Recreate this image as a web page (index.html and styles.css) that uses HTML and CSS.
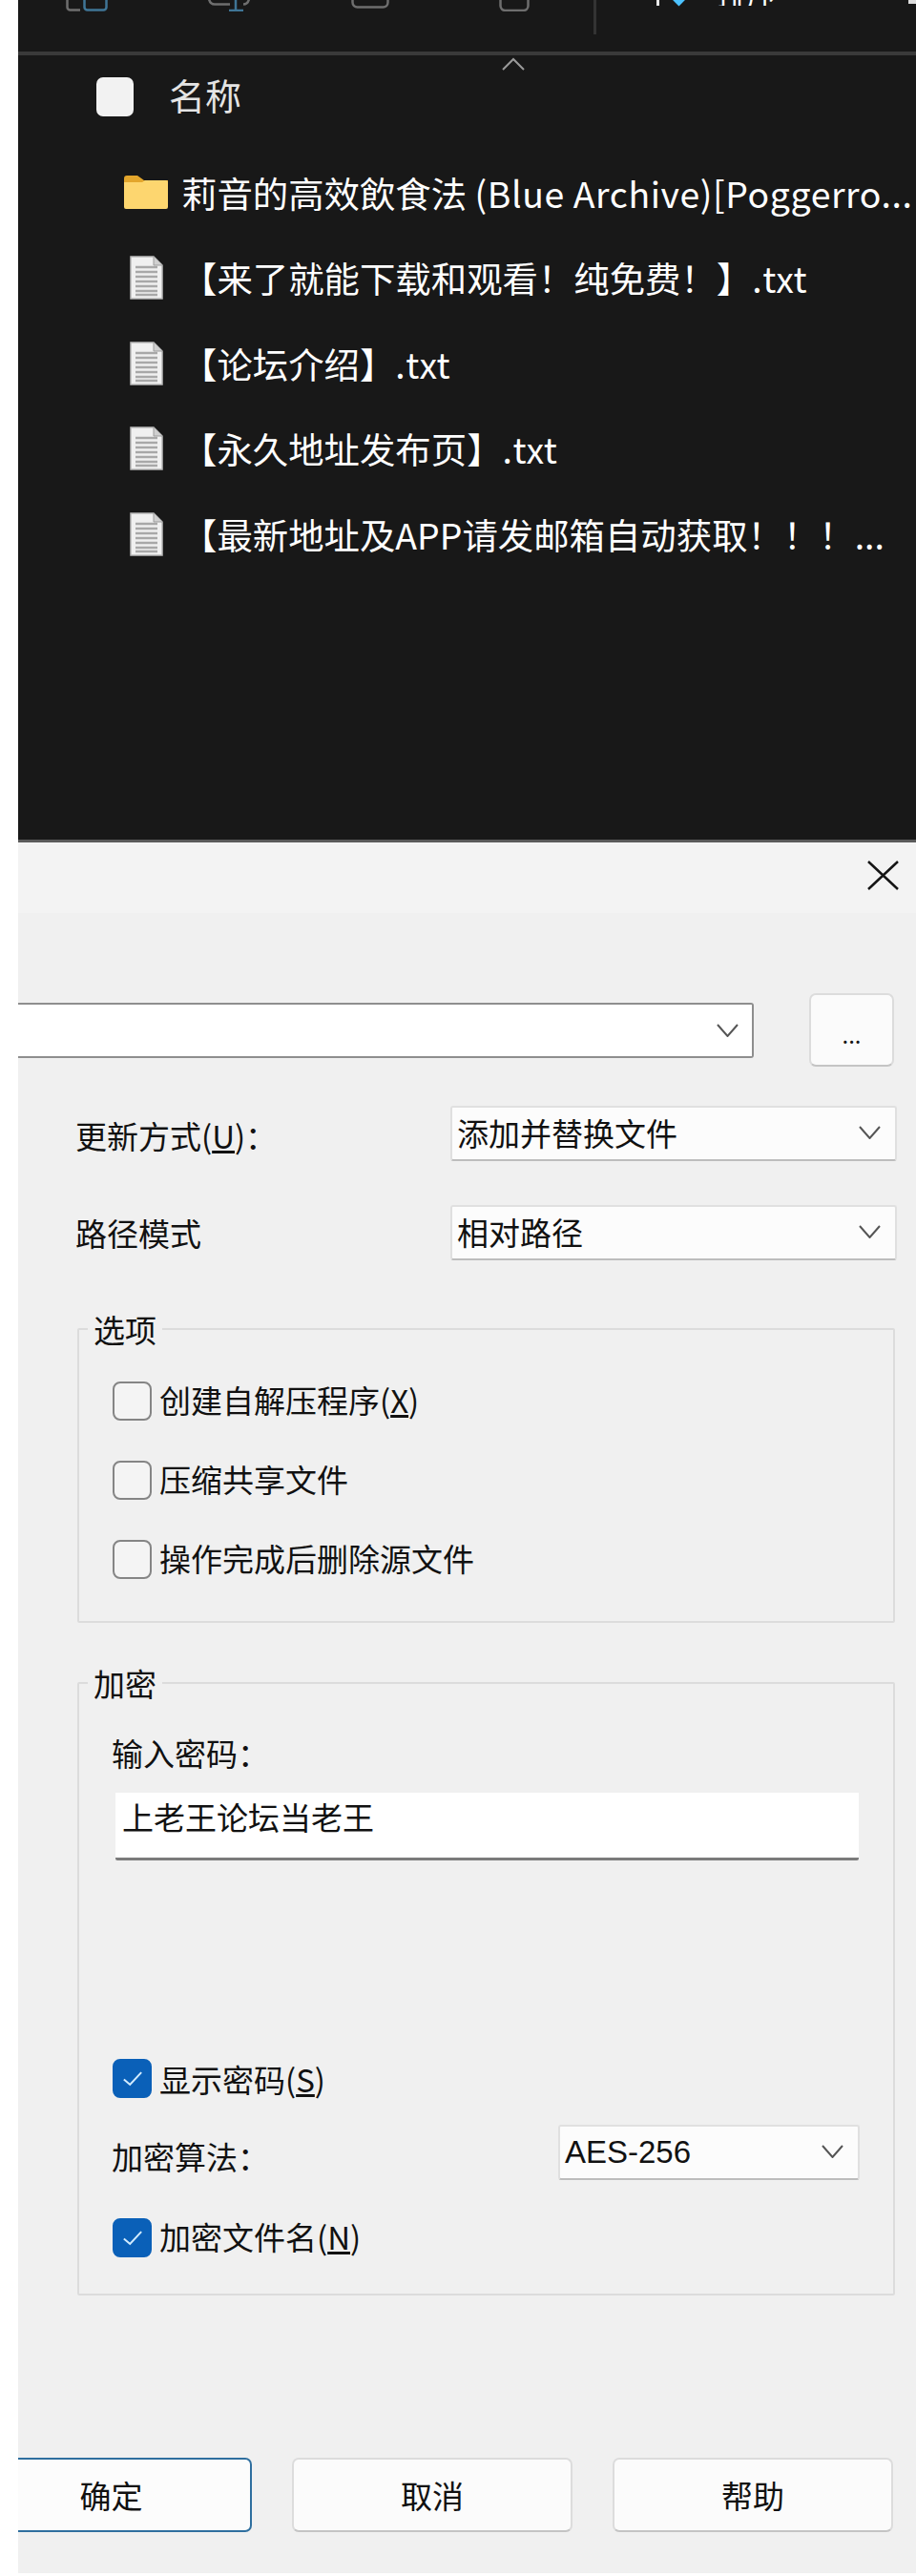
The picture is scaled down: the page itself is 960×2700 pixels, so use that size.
FILE: index.html
```html
<!DOCTYPE html>
<html lang="zh-CN">
<head>
<meta charset="utf-8">
<title>添加到压缩包</title>
<link rel="stylesheet" href="styles.css">
</head>
<body>
<main class="page">
  <section class="explorer">
    <div class="toolbar">
      <svg class="tool tool-a" viewBox="0 0 44 12"><path class="g" d="M1.5-6V7.5a3 3 0 0 0 3 3H15"/><rect class="b" x="19.5" y="-10" width="23" height="20.5" rx="3"/></svg>
      <svg class="tool tool-b" viewBox="0 0 46 12"><path class="g" d="M1.500-6Q1.500 4.500 8 4.500H24M38 4.500Q44.500 4.500 44.500-6"/><path class="b" d="M30-4V10M23 11H38"/></svg>
      <svg class="tool tool-c" viewBox="0 0 40 12"><rect class="g" x="1.500" y="-10" width="37" height="17.500" rx="5"/></svg>
      <svg class="tool tool-d" viewBox="0 0 32 12"><rect class="g" x="1.500" y="-10" width="29" height="21" rx="5"/></svg>
      <span class="divider"></span>
      <span class="stem"></span>
      <span class="diamond"></span>
      <span class="sort-label"><span>排序</span></span>
      <span class="blip"></span>
    </div>
    <div class="list-head">
      <span class="head-check"></span>
      <span class="head-name">名称</span>
      <svg class="caret" viewBox="0 0 24 14"><path d="M1 13 12 2l11 11"/></svg>
    </div>
    <ul class="files">
      <li class="file">
        <span class="slot"><svg class="folder" viewBox="0 0 46 35"><path class="tab" d="M0 3a3 3 0 0 1 3-3h11l7 5h25v6H0z"/><path class="body" d="M0 7h19l3-2h22a2 2 0 0 1 2 2v26a2 2 0 0 1-2 2H2a2 2 0 0 1-2-2z"/></svg></span>
        <span class="file-name">莉音的高效飲食法 <span class="latin">(Blue Archive)[Poggerro...</span></span>
      </li>
      <li class="file">
        <span class="slot"><svg class="doc" viewBox="0 0 35 46"><path class="sheet" d="M1 1h24l9 9v35H1z"/><path class="fold" d="M25 1v9h9"/><path class="rules" d="M6 12h23M6 17h23M6 22h23M6 27h23M6 32h23M6 37h23M6 41h23"/></svg></span>
        <span class="file-name">【来了就能下载和观看！纯免费！】<span class="latin">.txt</span></span>
      </li>
      <li class="file">
        <span class="slot"><svg class="doc" viewBox="0 0 35 46"><path class="sheet" d="M1 1h24l9 9v35H1z"/><path class="fold" d="M25 1v9h9"/><path class="rules" d="M6 12h23M6 17h23M6 22h23M6 27h23M6 32h23M6 37h23M6 41h23"/></svg></span>
        <span class="file-name">【论坛介绍】<span class="latin">.txt</span></span>
      </li>
      <li class="file">
        <span class="slot"><svg class="doc" viewBox="0 0 35 46"><path class="sheet" d="M1 1h24l9 9v35H1z"/><path class="fold" d="M25 1v9h9"/><path class="rules" d="M6 12h23M6 17h23M6 22h23M6 27h23M6 32h23M6 37h23M6 41h23"/></svg></span>
        <span class="file-name">【永久地址发布页】<span class="latin">.txt</span></span>
      </li>
      <li class="file">
        <span class="slot"><svg class="doc" viewBox="0 0 35 46"><path class="sheet" d="M1 1h24l9 9v35H1z"/><path class="fold" d="M25 1v9h9"/><path class="rules" d="M6 12h23M6 17h23M6 22h23M6 27h23M6 32h23M6 37h23M6 41h23"/></svg></span>
        <span class="file-name">【最新地址及APP请发邮箱自动获取！！！...</span>
      </li>
    </ul>
  </section>

  <section class="dialog">
    <div class="titlebar">
      <svg class="close" viewBox="0 0 33 31"><path d="M1 1l31 29M32 1 1 30"/></svg>
    </div>

    <div class="path-row">
      <div class="combo">
        <svg class="chev" viewBox="0 0 23 14"><path d="M1 1l10.500 12L22 1"/></svg>
      </div>
      <button class="btn btn-more" type="button">...</button>
    </div>

    <div class="field-row">
      <span class="label">更新方式(<u>U</u>)：</span>
      <div class="select select-wide"><span>添加并替换文件</span><svg class="chev" viewBox="0 0 23 14"><path d="M1 1l10.500 12L22 1"/></svg></div>
    </div>
    <div class="field-row field-row-next">
      <span class="label">路径模式</span>
      <div class="select select-wide"><span>相对路径</span><svg class="chev" viewBox="0 0 23 14"><path d="M1 1l10.500 12L22 1"/></svg></div>
    </div>

    <fieldset class="group group-options">
      <legend>选项</legend>
      <label class="check-row"><span class="box"></span><span class="check-text">创建自解压程序(<u>X</u>)</span></label>
      <label class="check-row"><span class="box"></span><span class="check-text">压缩共享文件</span></label>
      <label class="check-row"><span class="box"></span><span class="check-text">操作完成后删除源文件</span></label>
    </fieldset>

    <fieldset class="group group-crypt">
      <legend>加密</legend>
      <div class="label pw-label">输入密码：</div>
      <div class="pw-input">上老王论坛当老王</div>
      <label class="check-row show-pw"><span class="box box-on"><svg viewBox="0 0 24 18"><path d="M2 10l7 6L22 2"/></svg></span><span>显示密码(<u>S</u>)</span></label>
      <div class="algo-row">
        <span class="label algo-label">加密算法：</span>
        <div class="select select-algo"><span class="algo-value">AES-256</span><svg class="chev" viewBox="0 0 23 14"><path d="M1 1l10.500 12L22 1"/></svg></div>
      </div>
      <label class="check-row enc-name"><span class="box box-on"><svg viewBox="0 0 24 18"><path d="M2 10l7 6L22 2"/></svg></span><span class="check-text">加密文件名(<u>N</u>)</span></label>
    </fieldset>

    <div class="actions">
      <button class="btn btn-ok" type="button">确定</button>
      <button class="btn btn-plain" type="button">取消</button>
      <button class="btn btn-plain" type="button">帮助</button>
    </div>
  </section>
</main>
</body>
</html>
```
FILE: styles.css
```css
* { box-sizing: border-box; }
html, body { margin: 0; padding: 0; background: #fff; }
body {
  font-family: "Noto Sans CJK SC", "Noto Sans", sans-serif;
  font-size: 33px;
  color: #111;
}
.page { width: 960px; padding-left: 19px; }

/* explorer */
.explorer {
  height: 883px;
  background: #181818;
  color: #fff;
  border-bottom: 3px solid #5a5a5a;
}
.toolbar {
  height: 58px;
  display: flex;
  align-items: flex-start;
  border-bottom: 4px solid #3a3a3a;
  overflow: hidden;
}
.tool { height: 12px; flex: none; fill: none; stroke-width: 2.500; }
.tool .g { stroke: #6e6e6e; fill: none; }
.tool .b { stroke: #3f7596; fill: none; }
.tool-a { width: 44px; margin-left: 50px; }
.tool-b { width: 46px; margin-left: 104px; }
.tool-c { width: 40px; margin-left: 105px; }
.tool-d { width: 32px; margin-left: 115px; }
.divider { width: 3px; height: 36px; background: #333; margin-left: 67px; }
.stem { width: 3px; height: 6px; background: #e8e8e8; margin-left: 63px; }
.diamond {
  width: 15px; height: 15px; margin: -9px 0 0 13px;
  background: #4cc2ff; transform: rotate(45deg) scale(.75);
}
.sort-label { height: 6px; overflow: hidden; margin-left: 32px; width: 64px; }
.sort-label span { display: block; font-size: 32px; line-height: 32px; margin-top: -25px; }
.blip { width: 8px; height: 4px; background: #ddd; margin-left: auto; }

.list-head {
  height: 87px;
  display: flex;
  align-items: center;
}
.head-check {
  width: 39px; height: 41px; margin-left: 82px;
  background: #f2f2f2; border-radius: 7px;
}
.head-name { font-size: 38px; line-height: 44px; margin: -6px 0 0 37px; width: 76px; color: #e4e4e4; font-weight: 400; }
.caret {
  width: 24px; height: 14px; align-self: flex-start; margin: 2px 0 0 273px;
  fill: none; stroke: #9a9a9a; stroke-width: 2;
}

.files { list-style: none; margin: 0; padding: 12px 0 0; }
.file { height: 89.500px; display: flex; align-items: center; }
.slot { width: 46px; margin-left: 111px; display: flex; justify-content: center; flex: none; }
.folder { width: 46px; height: 35px; }
.tab { fill: #e3a62c; }
.folder .body { fill: #fdd66f; }
.doc { width: 35px; height: 46px; }
.sheet { fill: #f0f0f0; stroke: #b9b9b9; stroke-width: 1.500; }
.fold { fill: #cfcfcf; stroke: #9c9c9c; }
.rules { stroke: #a8a8a8; stroke-width: 2.500; fill: none; }
.file-name {
  margin-left: 14px;
  font-size: 37.400px;
  line-height: 46px;
  white-space: nowrap;
  font-weight: 400;
}
.latin { letter-spacing: .6px; }

/* dialog */
.dialog {
  height: 1814px;
  background: #f0f0f0;
  display: flex;
  flex-direction: column;
}
.titlebar {
  height: 74px;
  flex: none;
  background: #f3f3f3;
  display: flex;
  justify-content: flex-end;
  padding: 19px 18px 0 0;
}
.close { width: 33px; height: 31px; fill: none; stroke: #151515; stroke-width: 2.500; }

.path-row {
  margin-top: 84px;
  display: flex;
  align-items: center;
  gap: 58px;
  padding-right: 23px;
}
.combo {
  width: 771px; height: 58px;
  background: #fff;
  border: solid #8e8e8e;
  border-width: 2px 2px 2px 0;
  border-radius: 0 3px 3px 0;
  display: flex;
  align-items: center;
  justify-content: flex-end;
  padding-right: 14px;
}
.chev { width: 23px; height: 14px; flex: none; fill: none; stroke: #555; stroke-width: 2; }

.btn {
  font: inherit;
  color: #111;
  background: #fbfbfb;
  border: 2px solid #dcdcdc;
  border-bottom-color: #c4c4c4;
  border-radius: 7px;
  padding: 0;
}
.btn-more { width: 89px; height: 77px; font-size: 24px; line-height: 30px; padding-top: 8px; }

.field-row {
  margin-top: 41px;
  display: flex;
  justify-content: space-between;
  align-items: center;
  padding: 0 20px 0 60px;
}
.field-row-next { margin-top: 46px; }
.label { font-size: 33px; line-height: 34px; padding-top: 3px; }
.field-row-next .label { padding-top: 0; }
.select {
  height: 58px;
  background: #fcfcfc;
  border: 2px solid #e0e0e0;
  border-bottom-color: #bdbdbd;
  border-radius: 3px;
  display: flex;
  align-items: center;
  justify-content: space-between;
  padding: 0 15px 2px 5px;
  font-size: 33px;
  line-height: 40px;
}
.select-wide { width: 468px; }
.select-algo { width: 316px; }
.algo-value { font-family: "Liberation Sans", sans-serif; font-size: 33px; padding-top: 2px; }

.group {
  margin: 55px 22px 0 62px;
  padding: 38px 35px 44px 35px;
  border: 2px solid #dcdcdc;
  border-radius: 2px;
  min-width: 0;
}
.group legend {
  margin-left: -26px;
  padding: 0 6px;
  font-size: 33px;
  line-height: 34px;
}
.group-crypt { margin-top: 46px; padding-top: 39px; padding-bottom: 38px; }

.check-row {
  display: flex;
  align-items: center;
  height: 41px;
  gap: 8px;
  font-size: 33px;
  line-height: 36px;
}
.check-row + .check-row { margin-top: 42px; }
.check-text { margin-top: -3px; }
.box {
  width: 41px; height: 41px; flex: none;
  background: #f4f4f4;
  border: 2px solid #858585;
  border-radius: 8px;
}
.box-on {
  background: #0a60b8;
  border-color: #0a60b8;
  display: flex;
  align-items: center;
  justify-content: center;
}
.box-on svg { width: 22px; height: 17px; fill: none; stroke: #d3ecff; stroke-width: 2.200; }

.pw-label { padding-top: 0; margin-left: -1px; }
.pw-input {
  margin: 25px 0 0 3px;
  width: 779px;
  height: 71px;
  background: #fff;
  border-bottom: 3px solid #7b7b7b;
  border-radius: 0 0 2px 2px;
  padding: 4px 0 0 7px;
  font-size: 33px;
  line-height: 42px;
}
.check-row.show-pw { margin-top: 208px; }
.algo-row {
  margin-top: 28px;
  display: flex;
  justify-content: space-between;
  align-items: center;
}
.algo-label { padding-top: 8px; margin-left: -1px; }
.check-row.enc-name { margin-top: 40px; }

.actions {
  margin-top: 170px;
  display: flex;
  gap: 42px;
  padding-right: 24px;
}
.actions .btn { height: 78px; font-size: 33px; line-height: 40px; }
.btn-ok {
  width: 245px;
  background: #fcfcfc;
  border: 2px solid #2f6f9f;
  border-left: 0;
  border-radius: 0 7px 7px 0;
  padding-right: 48px;
}
.btn-plain { width: 294px; }
```
